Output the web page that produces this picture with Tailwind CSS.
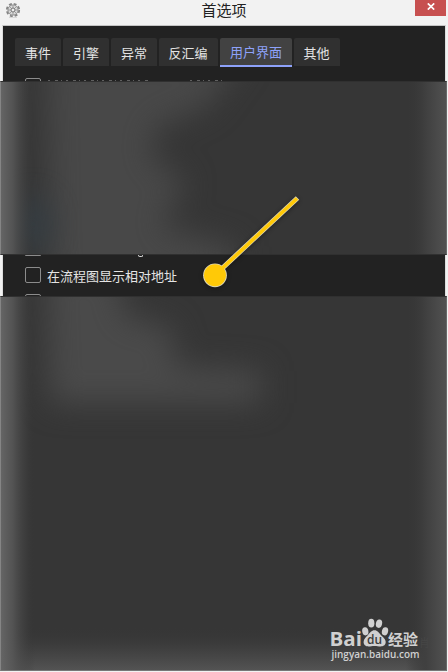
<!DOCTYPE html>
<html lang="zh-CN">
<head>
<meta charset="utf-8">
<title>首选项</title>
<script src="https://cdn.jsdelivr.net/npm/@tailwindcss/browser@4"></script>
</head>
<body class="bg-[#f2f2f2] font-['Noto_Sans_CJK_SC',sans-serif]">
<div class="relative flex h-[672px] w-[448px] flex-col overflow-hidden bg-[#f2f2f2]">
  <header class="flex h-[25px] shrink-0 items-start justify-between pl-[5px] pr-[2px]">
    <svg class="mt-[2px] h-4 w-[28px]" viewBox="0 0 28 16" fill="none">
      <circle cx="8" cy="8" r="6.2" stroke="#858585" stroke-width="1.8" stroke-dasharray="2.9 1.97"/>
      <circle cx="8" cy="8" r="5.1" fill="#d9d9d9" stroke="#888" stroke-width=".9"/>
      <path d="M8 3v10M3 8h10M4.5 4.5l7 7M11.5 4.5l-7 7" stroke="#999" stroke-width=".9"/>
      <circle cx="8" cy="8" r="2" fill="#eee" stroke="#777" stroke-width="1"/>
      <path d="M4 15.5h8" stroke="#ccc" stroke-width=".7"/>
    </svg>
    <h1 class="text-[15px] leading-[20px] text-[#222]">首选项</h1>
    <button class="flex h-4 w-[31px] items-center justify-center bg-[#c75050]" aria-label="关闭">
      <svg class="-mt-[3px] ml-px h-[7px] w-2" viewBox="0 0 8 7"><path d="M.8.4 7.2 6.6M7.2.4.8 6.6" stroke="#fff" stroke-width="1.7"/></svg>
    </button>
  </header>

  <section class="mx-[2px] flex h-14 shrink-0 flex-col overflow-hidden border-x border-t border-x-[#ddd] border-t-[#c4c4c4] bg-[#222]">
    <nav class="flex h-[41px] shrink-0 items-start gap-[2px] pl-3 pt-3 text-[13px] leading-[29px] text-[#e4e4e4]">
      <span class="h-7 w-[46px] rounded-t-[2px] bg-[#303030] text-center">事件</span>
      <span class="h-7 w-[46px] rounded-t-[2px] bg-[#303030] text-center">引擎</span>
      <span class="h-7 w-[46px] rounded-t-[2px] bg-[#303030] text-center">异常</span>
      <span class="h-7 w-[59px] rounded-t-[2px] bg-[#303030] pr-px text-center">反汇编</span>
      <span class="h-[29px] w-[72px] rounded-t-[2px] border-b-2 border-[#8ea2fa] bg-[#424242] text-center leading-[27px] text-[#8ea2fa]">用户界面</span>
      <span class="h-7 w-[46px] rounded-t-[2px] bg-[#303030] pr-px text-center">其他</span>
    </nav>
    <div class="flex shrink-0 pl-[22px] pt-[11px]">
      <span class="h-4 w-4 shrink-0 rounded-[2px] border border-[#8c8c8c]"></span>
      <svg class="ml-[6px] mt-[2px] h-px w-[180px]" viewBox="0 0 180 1"><path d="M1 .5h102M143 .5h32" stroke="#606060" stroke-dasharray="2 5 3 3 1 4"/></svg>
    </div>
  </section>

  <section class="mr-px h-[174px] shrink-0 border border-l-[#858585] border-r-[#696969] border-y-[#303030] bg-[#363636]">
    <svg class="block h-full w-full" viewBox="0 0 445 172" preserveAspectRatio="none">
      <defs>
        <filter id="soft" filterUnits="userSpaceOnUse" x="-80" y="-120" width="600" height="520" color-interpolation-filters="sRGB"><feGaussianBlur stdDeviation="15"/></filter>
        <linearGradient id="left"><stop stop-color="#656565"/><stop offset=".35" stop-color="#585858" stop-opacity=".85"/><stop offset=".7" stop-color="#484848" stop-opacity=".4"/><stop offset="1" stop-color="#363636" stop-opacity="0"/></linearGradient>
        <linearGradient id="right"><stop stop-color="#363636" stop-opacity="0"/><stop offset=".5" stop-color="#404040"/><stop offset="1" stop-color="#515151"/></linearGradient>
      </defs>
      <path d="M45-30H245L205 25 155 45 150 75 185 100 160 145 235 165V205H50Z" fill="#484848" filter="url(#soft)"/>
      <ellipse cx="32" cy="142" rx="16" ry="28" fill="#344048" opacity=".8" filter="url(#soft)"/>
      <path d="M0 0h34v172H0z" fill="url(#left)"/>
      <path d="M405 0h40v172h-40z" fill="url(#right)"/>
    </svg>
  </section>

  <section class="mx-[2px] flex h-[41px] shrink-0 flex-col overflow-hidden border-x border-x-[#ddd] bg-[#222] pl-[22px]">
    <div class="flex h-3 shrink-0 items-start">
      <div class="h-px w-4 rounded-b-[2px] border-b border-[#8c8c8c]"></div>
      <div class="ml-[97px] h-[2px] w-[5px] rounded-b-full border-x border-b border-[#d8d8d8]"></div>
    </div>
    <label class="flex h-4 shrink-0 items-center gap-[6px] text-[13px] leading-4 text-[#e4e4e4]">
      <span class="h-4 w-4 rounded-[2px] border border-[#8c8c8c]"></span>
      <span class="pt-[2px]">在流程图显示相对地址</span>
    </label>
    <div class="mt-[11px] h-4 w-4 shrink-0 rounded-[2px] border border-[#8c8c8c]"></div>
  </section>

  <section class="mr-px h-[375px] shrink-0 border border-b-[#777] border-l-[#858585] border-r-[#696969] border-t-[#303030] bg-[#363636]">
    <svg class="block h-full w-full" viewBox="0 0 445 373" preserveAspectRatio="none">
      <defs>
        <linearGradient id="bottom" x2="0" y2="1"><stop stop-color="#363636" stop-opacity="0"/><stop offset=".55" stop-color="#424242" stop-opacity=".9"/><stop offset="1" stop-color="#535353"/></linearGradient>
      </defs>
      <path d="M45-30H115L125 20 170 30 175 70 260 74V106H50Z" fill="#4a4a4a" filter="url(#soft)"/>
      <path d="M0 330h445v43H0z" fill="url(#bottom)"/>
      <path d="M0 0h34v373H0z" fill="url(#left)"/>
      <path d="M405 0h40v373h-40z" fill="url(#right)"/>
    </svg>
  </section>

  <svg class="pointer-events-none absolute left-[190px] top-[180px] h-[130px] w-[130px]" viewBox="0 0 130 130" style="filter:drop-shadow(0 1px 2px rgb(0 0 0 / .4))">
    <path d="M25 95 107.500 18" stroke="#ddd5b4" stroke-width="5"/>
    <circle cx="25" cy="95.300" r="11.900" fill="#ddd5b4"/>
    <path d="M25 95 107 18.500" stroke="#ffc907" stroke-width="3.600"/>
    <circle cx="25" cy="95.300" r="11" fill="#ffc907"/>
  </svg>

  <svg class="absolute left-[318px] top-[602px] h-[70px] w-[130px]" viewBox="0 0 130 70" fill="#d0d0d0">
    <text x="101" y="45" font-size="11" fill="#464646" font-family="Noto Sans CJK SC">肖</text>
    <text x="11.500" y="43.700" font-size="19.500" font-weight="700" textLength="32.500" lengthAdjust="spacingAndGlyphs" font-family="Open Sans, sans-serif">Bai</text>
    <ellipse cx="47.300" cy="29.300" rx="3.100" ry="4.100" transform="rotate(-10 47.300 29.300)"/>
    <ellipse cx="53.300" cy="21.200" rx="3.100" ry="4.400"/>
    <ellipse cx="61" cy="21.700" rx="3.100" ry="4.200" transform="rotate(12 61 21.700)"/>
    <ellipse cx="67" cy="29.300" rx="3.100" ry="4.100" transform="rotate(14 67 29.300)"/>
    <path d="M56.500 28.300c3 0 4.300 2.500 6.300 4.700s4.900 3.900 4.900 7.100c0 3.200-2.400 4.400-5.200 4.400-2 0-3.500-.6-6-.6s-4 .6-6 .6c-2.500 0-4.900-1.200-4.900-4.400 0-3.200 2.400-4.900 4.400-7.100s3.500-4.700 6.500-4.700Z"/>
    <text x="49" y="41.800" font-size="12" font-weight="600" fill="#3c3c3c" textLength="15" lengthAdjust="spacingAndGlyphs" font-family="Open Sans, sans-serif">du</text>
    <text x="70" y="42.700" font-size="15" font-weight="700" textLength="30" lengthAdjust="spacingAndGlyphs" font-family="Noto Sans CJK SC, sans-serif">经验</text>
    <text x="13.500" y="55.500" font-size="10.500" font-weight="600" textLength="88" lengthAdjust="spacingAndGlyphs" font-family="Open Sans, sans-serif">jingyan.baidu.com</text>
  </svg>
</div>
</body>
</html>
